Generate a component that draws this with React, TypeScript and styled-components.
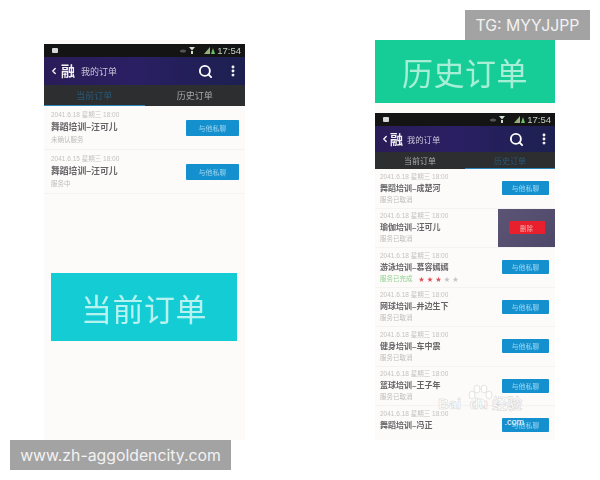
import React from "react";
import styled, { createGlobalStyle } from "styled-components";
import { ChevronLeft, MoreVertical, Search } from "lucide-react";

const CJK = `"Liberation Sans", "Noto Sans CJK SC", sans-serif`;

type Order = {
  title: string;
  status: string;
  date?: string;
  rated?: boolean;
  removed?: boolean;
};

const currentOrders: Order[] = [
  { title: "舞蹈培训–汪可儿", status: "未确认服务" },
  { title: "舞蹈培训–汪可儿", status: "服务中", date: "2041.6.15 星期三 18:00" },
];

const historyOrders: Order[] = [
  { title: "舞蹈培训–成楚河", status: "服务已取消" },
  { title: "瑜伽培训–汪可儿", status: "服务已取消", removed: true },
  { title: "游泳培训–慕容嫣嫣", status: "服务已完成", rated: true },
  { title: "网球培训–井边生下", status: "服务已取消" },
  { title: "健身培训–车中震", status: "服务已取消" },
  { title: "篮球培训–王子年", status: "服务已取消" },
  { title: "舞蹈培训–冯正", status: "" },
];

const App = (): JSX.Element => {
  return (
    <Page>
      <GlobalStyle />
      <Column width={201}>
        <Phone tab="current" orders={currentOrders} rowHeight={44} />
        <LeftBanner>当前订单</LeftBanner>
      </Column>
      <Column width={180}>
        <RightBanner>历史订单</RightBanner>
        <Phone tab="history" orders={historyOrders} rowHeight={39.5} compact />
      </Column>
      <Tag>TG: MYYJJPP</Tag>
      <SiteTag>www.zh-aggoldencity.com</SiteTag>
      <Watermark>
        <svg width="30" height="24" viewBox="0 0 30 24">
          <g fill="#ffffff" stroke="#dcdcdc" strokeWidth="1" opacity="0.8">
            <ellipse cx="7" cy="11" rx="3" ry="4" />
            <ellipse cx="12" cy="5" rx="3" ry="4" />
            <ellipse cx="19" cy="5" rx="3" ry="4" />
            <ellipse cx="24" cy="11" rx="3" ry="4" />
            <path d="M8 22c0-5 4-7 7-7s7 2 7 7z" />
          </g>
        </svg>
        <WatermarkText>Bai  du 经验</WatermarkText>
        <WatermarkCom>.com</WatermarkCom>
      </Watermark>
    </Page>
  );
};

const Phone = ({
  tab,
  orders,
  rowHeight,
  compact,
}: {
  tab: "current" | "history";
  orders: Order[];
  rowHeight: number;
  compact?: boolean;
}): JSX.Element => {
  return (
    <PhoneFrame>
      <StatusBar>
        <StatusLeft />
        <StatusIcons>
          <svg width="36" height="9" viewBox="0 0 36 9">
            <ellipse cx="3" cy="5" rx="3" ry="1.5" fill="#555" />
            <path d="M9 1h6l-3 3.5zM11 5h2v3h-2z" fill="#cfe0cf" />
            <path d="M24 8l6-7v7z" fill="#9ab07c" />
            <path d="M31 8l2-6 2 6z" fill="#6fbf6a" />
          </svg>
          <Clock>17:54</Clock>
        </StatusIcons>
      </StatusBar>
      <AppBar compact={compact}>
        <ChevronLeft size={10} color="#fff" strokeWidth={3} />
        <Logo compact={compact}>融</Logo>
        <AppTitle compact={compact}>我的订单</AppTitle>
        <AppActions>
          <Search size={15} color="#fff" strokeWidth={3} />
          <MoreVertical size={14} color="#fff" strokeWidth={3} />
        </AppActions>
      </AppBar>
      <Tabs compact={compact}>
        <TabItem active={tab === "current"} compact={compact}>当前订单</TabItem>
        <TabItem active={tab === "history"} compact={compact}>历史订单</TabItem>
      </Tabs>
      {orders.map((order, i) => (
        <Row key={i} style={{ height: rowHeight }} compact={compact}>
          <RowText compact={compact}>
            <RowDate>{order.date || "2041.6.18 星期三 18:00"}</RowDate>
            <RowTitle compact={compact}>{order.title}</RowTitle>
            <RowStatus>
              <StatusLabel done={order.rated}>{order.status}</StatusLabel>
              {order.rated && (
                <Stars>
                  <Star on>★</Star>
                  <Star on>★</Star>
                  <Star on>★</Star>
                  <Star>★</Star>
                  <Star>★</Star>
                </Stars>
              )}
            </RowStatus>
          </RowText>
          {order.removed ? (
            <DeletePanel>
              <DeleteButton>删除</DeleteButton>
            </DeletePanel>
          ) : (
            <ChatButton compact={compact}>与他私聊</ChatButton>
          )}
        </Row>
      ))}
    </PhoneFrame>
  );
};

export default App;

const GlobalStyle = createGlobalStyle`
  html, body {
    margin: 0;
    padding: 0;
    background: #ffffff;
    font-family: ${CJK};
  }
`;

const Page = styled.div`
  position: relative;
  width: 600px;
  height: 480px;
  box-sizing: border-box;
  padding: 40px 45px 40px 44px;
  display: flex;
  justify-content: space-between;
  overflow: hidden;
  background: #ffffff;
`;

const Column = styled.div<{ width: number }>`
  width: ${({ width }) => width}px;
  height: 400px;
  display: flex;
  flex-direction: column;
  background: #fdfbfa;
  overflow: hidden;
  filter: blur(0.5px);
`;

const LeftBanner = styled.div`
  flex: none;
  width: 186px;
  height: 68px;
  margin: 79px 0 0 7px;
  display: flex;
  align-items: center;
  justify-content: center;
  background: #13ccd4;
  color: #b6f2f0;
  font-size: 31px;
  letter-spacing: 0.5px;
`;

const RightBanner = styled.div`
  flex: none;
  height: 63px;
  margin-bottom: 10px;
  display: flex;
  align-items: center;
  justify-content: center;
  background: #16cd97;
  color: #a6efd6;
  font-size: 31px;
  letter-spacing: 0.5px;
`;

const PhoneFrame = styled.div`
  flex: none;
  margin-top: 4px;
  display: flex;
  flex-direction: column;
  ${RightBanner} + & {
    margin-top: 0;
  }
`;

const StatusBar = styled.div`
  height: 13px;
  padding: 0 4px 0 8px;
  display: flex;
  align-items: center;
  justify-content: space-between;
  background: #141414;
`;

const StatusLeft = styled.span`
  width: 6px;
  height: 5px;
  border-radius: 1px;
  background: #d8d8d8;
`;

const StatusIcons = styled.div`
  display: flex;
  align-items: center;
  gap: 1px;
`;

const Clock = styled.span`
  color: #c4d0c4;
  font-size: 9.5px;
`;

const AppBar = styled.div<{ compact?: boolean }>`
  height: ${({ compact }) => (compact ? 26 : 28)}px;
  padding: 0 ${({ compact }) => (compact ? 4 : 5)}px 0 5px;
  display: flex;
  align-items: center;
  background: linear-gradient(90deg, #2a1c58 0%, #2a1f63 45%, #1c2050 100%);
`;

const Logo = styled.span<{ compact?: boolean }>`
  margin: 0 ${({ compact }) => (compact ? "4px 0 0" : "6px 0 2px")};
  color: #f2f2f2;
  font-size: ${({ compact }) => (compact ? 13 : 14)}px;
  font-weight: 700;
  line-height: 1;
`;

const AppTitle = styled.span<{ compact?: boolean }>`
  color: #c9c6d8;
  font-size: ${({ compact }) => (compact ? 8.3 : 9)}px;
`;

const AppActions = styled.div`
  margin-left: auto;
  display: flex;
  align-items: center;
  gap: 13px;
`;

const Tabs = styled.div<{ compact?: boolean }>`
  height: ${({ compact }) => (compact ? 17 : 21)}px;
  display: flex;
  background: #2d2e30;
`;

const TabItem = styled.div<{ active?: boolean; compact?: boolean }>`
  flex: 1;
  display: flex;
  align-items: center;
  justify-content: center;
  box-sizing: border-box;
  border-bottom: 1px solid ${({ active }) => (active ? "#2a86b8" : "transparent")};
  color: ${({ active }) => (active ? "#265a78" : "#a9a9a9")};
  font-size: ${({ compact }) => (compact ? 8 : 9)}px;
`;

const Row = styled.div<{ compact?: boolean }>`
  position: relative;
  flex: none;
  box-sizing: border-box;
  padding-left: ${({ compact }) => (compact ? 5 : 7)}px;
  padding-right: 6px;
  display: flex;
  align-items: center;
  justify-content: space-between;
  border-bottom: 1px solid #f5f3f2;
`;

const RowText = styled.div<{ compact?: boolean }>`
  display: flex;
  flex-direction: column;
  gap: ${({ compact }) => (compact ? 2 : 3)}px;
`;

const RowDate = styled.div`
  color: #c4c2c0;
  font-size: 6.5px;
  line-height: 8px;
`;

const RowTitle = styled.div<{ compact?: boolean }>`
  color: #666669;
  font-size: ${({ compact }) => (compact ? 8 : 8.8)}px;
  font-weight: 700;
  line-height: 11px;
`;

const RowStatus = styled.div`
  height: 8px;
  display: flex;
  align-items: center;
  gap: 6px;
`;

const StatusLabel = styled.span<{ done?: boolean }>`
  color: ${({ done }) => (done ? "#8ed08e" : "#bdbbb9")};
  font-size: 6.5px;
  line-height: 8px;
`;

const Stars = styled.span`
  display: flex;
  gap: 2.5px;
`;

const Star = styled.span<{ on?: boolean }>`
  color: ${({ on }) => (on ? "#d9505a" : "#c4c4c4")};
  font-size: 6px;
  line-height: 8px;
`;

const ChatButton = styled.div<{ compact?: boolean }>`
  width: ${({ compact }) => (compact ? 47 : 53)}px;
  height: ${({ compact }) => (compact ? 14 : 16)}px;
  display: flex;
  align-items: center;
  justify-content: center;
  border-radius: 1px;
  background: #1590cf;
  color: #9ad6f0;
  font-size: 7px;
`;

const DeletePanel = styled.div`
  position: absolute;
  top: 0;
  right: 0;
  width: 57px;
  height: 100%;
  display: flex;
  align-items: center;
  justify-content: center;
  background: linear-gradient(135deg, #5c5474 0%, #4e4868 100%);
`;

const DeleteButton = styled.div`
  width: 36px;
  height: 13px;
  display: flex;
  align-items: center;
  justify-content: center;
  background: #e8202e;
  color: #f7b0b0;
  font-size: 6.5px;
`;

const Tag = styled.div`
  position: absolute;
  top: 10px;
  right: 10px;
  width: 125px;
  height: 30px;
  display: flex;
  align-items: center;
  justify-content: center;
  background: #a3a3a3;
  color: #f2f2f2;
  font-family: "Inter", sans-serif;
  font-size: 15.8px;
`;

const SiteTag = styled.div`
  position: absolute;
  left: 10px;
  top: 440px;
  width: 221px;
  height: 30px;
  display: flex;
  align-items: center;
  justify-content: center;
  background: #a3a3a3;
  color: #f2f2f2;
  font-family: "Inter", sans-serif;
  font-size: 15.8px;
`;

const Watermark = styled.div`
  position: absolute;
  left: 432px;
  top: 384px;
  width: 96px;
  height: 46px;
  display: flex;
  flex-direction: column;
  align-items: center;
  pointer-events: none;
`;

const WatermarkText = styled.div`
  margin-top: -12px;
  color: rgba(255, 255, 255, 0.75);
  -webkit-text-stroke: 0.5px #d4d4d4;
  font-size: 15px;
  font-weight: 700;
  line-height: 16px;
  white-space: pre;
`;

const WatermarkCom = styled.div`
  align-self: flex-end;
  margin-top: 6px;
  margin-right: 4px;
  color: #ffffff;
  font-size: 9px;
  line-height: 9px;
`;
